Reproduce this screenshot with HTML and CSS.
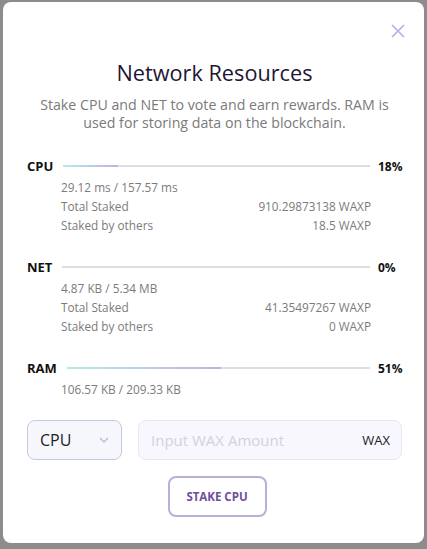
FILE: index.html
```html
<!DOCTYPE html>
<html lang="en">
<head>
  <meta charset="UTF-8" />
  <meta name="viewport" content="width=device-width, initial-scale=1.0"/>
  <title>Network Resources</title>
  <link rel="stylesheet" href="styles.css">
</head>
<body>
  <div class="modal">
    <button class="close" aria-label="Close">
      <svg width="14" height="14" viewBox="0 0 14 14">
        <path d="M1 1 L13 13 M13 1 L1 13" stroke="#b7ade6" stroke-width="1.6" fill="none"/>
      </svg>
    </button>

    <h1>Network Resources</h1>
    <p class="intro">Stake CPU and NET to vote and earn rewards. RAM is used for storing data on the blockchain.</p>

    <div class="resource">
      <div class="bar-row">
        <span class="label">CPU</span>
        <div class="bar"><div class="fill" style="width: 18%"></div></div>
        <span class="pct">18%</span>
      </div>
      <div class="details">
        <div class="line">29.12 ms / 157.57 ms</div>
        <div class="line"><span>Total Staked</span><span>910.29873138 WAXP</span></div>
        <div class="line"><span>Staked by others</span><span>18.5 WAXP</span></div>
      </div>
    </div>

    <div class="resource">
      <div class="bar-row">
        <span class="label">NET</span>
        <div class="bar"><div class="fill" style="width: 0%"></div></div>
        <span class="pct">0%</span>
      </div>
      <div class="details">
        <div class="line">4.87 KB / 5.34 MB</div>
        <div class="line"><span>Total Staked</span><span>41.35497267 WAXP</span></div>
        <div class="line"><span>Staked by others</span><span>0 WAXP</span></div>
      </div>
    </div>

    <div class="resource">
      <div class="bar-row">
        <span class="label">RAM</span>
        <div class="bar"><div class="fill" style="width: 51%"></div></div>
        <span class="pct">51%</span>
      </div>
      <div class="details">
        <div class="line">106.57 KB / 209.33 KB</div>
      </div>
    </div>

    <div class="form-row">
      <div class="select">
        <span>CPU</span>
        <svg width="10" height="6" viewBox="0 0 10 6">
          <path d="M1 1 L5 5 L9 1" stroke="#b9b6c8" stroke-width="1.1" fill="none"/>
        </svg>
      </div>
      <div class="amount">
        <span class="placeholder">Input WAX Amount</span>
        <span class="unit">WAX</span>
      </div>
    </div>

    <div class="actions">
      <button class="stake">STAKE CPU</button>
    </div>
  </div>
</body>
</html>
```

FILE: styles.css
```css
body {
  margin: 0;
  padding: 2px 3px 6px 3px;
  background-color: #8c8c8c;
  font-family: "Open Sans", Arial, sans-serif;
}

.modal {
  position: relative;
  background-color: #fff;
  border-radius: 8px;
  height: 541px;
  box-sizing: border-box;
  padding: 56px 22px 0 24px;
}

.close {
  position: absolute;
  top: 22px;
  right: 19px;
  background: transparent;
  border: none;
  padding: 0;
  cursor: pointer;
}

h1 {
  margin: 0;
  text-align: center;
  font-size: 21.7px;
  font-weight: 400;
  color: #1f1535;
  line-height: 30px;
}

.intro {
  margin: 8px auto 0;
  max-width: 366px;
  text-align: center;
  font-size: 14.2px;
  line-height: 18px;
  color: #7a7a7a;
}

.resource {
  margin-top: 25px;
}

.resource + .resource {
  margin-top: 23px;
}

.bar-row {
  display: flex;
  align-items: center;
  gap: 10px;
}

.label {
  font-size: 13px;
  font-weight: 700;
  color: #111;
}

.bar {
  flex: 1;
  height: 2px;
  background-color: #dedde2;
}

.fill {
  height: 100%;
  background: linear-gradient(to right, #b3ece9, #c3b2dd);
}

.pct {
  width: 24px;
  margin-left: -2px;
  font-size: 12px;
  font-weight: 700;
  color: #111;
}

.details {
  margin: 3px 31px 0 34px;
}

.line {
  display: flex;
  justify-content: space-between;
  font-size: 11.8px;
  line-height: 19px;
  color: #7b7b7b;
}

.form-row {
  display: flex;
  gap: 16px;
  margin-top: 21px;
}

.select {
  width: 95px;
  height: 40px;
  box-sizing: border-box;
  display: flex;
  align-items: center;
  justify-content: space-between;
  padding: 0 12px 0 12px;
  border: 1px solid #cbc7de;
  border-radius: 8px;
  background-color: #f6f6fd;
  font-size: 16px;
  color: #222;
}

.amount {
  flex: 1;
  height: 40px;
  box-sizing: border-box;
  display: flex;
  align-items: center;
  justify-content: space-between;
  padding: 0 11px 0 12px;
  border: 1px solid #e9e7f5;
  border-radius: 8px;
  background-color: #f7f7fd;
}

.placeholder {
  font-size: 15px;
  color: #d3d0e2;
}

.unit {
  font-size: 13px;
  color: #222;
}

.actions {
  display: flex;
  justify-content: center;
  margin-top: 16px;
  padding-left: 5px;
}

.stake {
  width: 99px;
  height: 41px;
  border: 2px solid #b9afd9;
  border-radius: 8px;
  background-color: #fff;
  font-family: "Open Sans", Arial, sans-serif;
  font-size: 11.5px;
  font-weight: 700;
  color: #6e4f9b;
  cursor: pointer;
}
```
